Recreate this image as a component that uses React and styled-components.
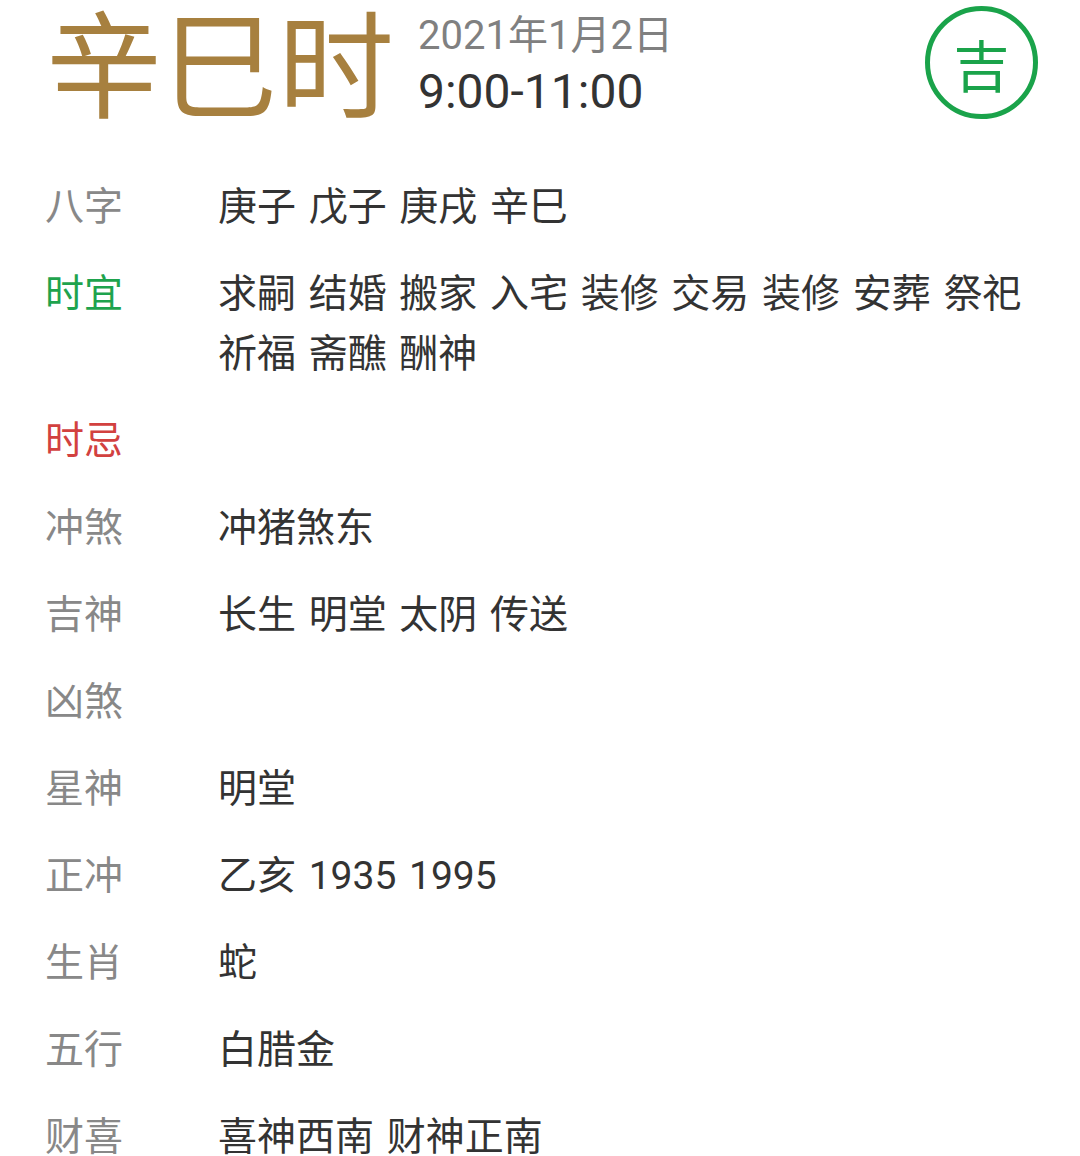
import React from 'react';
import styled, { createGlobalStyle } from 'styled-components';

const GlobalStyle = createGlobalStyle`
    html, body {
        margin: 0;
        padding: 0;
        background: #fff;
    }
    body {
        font-family: Roboto, "Noto Sans CJK SC", sans-serif;
        color: #333;
    }
`;

const Page = styled.div`
    width: 1080px;
    height: 1156px;
    overflow: hidden;
    padding: 0 45px;
    box-sizing: border-box;
`;

const Header = styled.div`
    display: flex;
    align-items: flex-start;
    height: 132px;
`;

const HourName = styled.div`
    font-family: "Noto Sans CJK SC", sans-serif;
    font-size: 116px;
    line-height: 128px;
    color: #a7803f;
    margin-top: -6px;
    margin-left: 1px;
`;

const DateBlock = styled.div`
    display: flex;
    flex-direction: column;
    margin-left: 24px;
    padding-top: 12px;
`;

const DateText = styled.div`
    font-size: 40px;
    line-height: 48px;
    color: #808080;
`;

const TimeText = styled.div`
    font-size: 48px;
    line-height: 64px;
    color: #333;
`;

const Badge = styled.div`
    margin-left: auto;
    margin-right: -3px;
    margin-top: 6px;
    width: 103px;
    height: 103px;
    border: 5px solid #1aa34a;
    border-radius: 50%;
    display: flex;
    align-items: center;
    justify-content: center;
    color: #1aa34a;
    font-family: "Noto Sans CJK SC", sans-serif;
    font-size: 56px;
    line-height: 1;
`;

const Table = styled.div`
    display: grid;
    grid-template-columns: 173px 1fr;
    row-gap: 27px;
    margin-top: 45px;
`;

const Label = styled.div`
    font-size: 39px;
    line-height: 60px;
    color: ${p => p.tone === 'good' ? '#1ea34d' : p.tone === 'bad' ? '#d2413f' : '#888'};
`;

const Value = styled.div`
    font-size: 39px;
    line-height: 60px;
    color: #333;
    word-spacing: 3px;
`;

const rows = [
    { label: '八字', value: '庚子 戊子 庚戌 辛巳' },
    { label: '时宜', tone: 'good', value: '求嗣 结婚 搬家 入宅 装修 交易 装修 安葬 祭祀 祈福 斋醮 酬神' },
    { label: '时忌', tone: 'bad', value: '' },
    { label: '冲煞', value: '冲猪煞东' },
    { label: '吉神', value: '长生 明堂 太阴 传送' },
    { label: '凶煞', value: '' },
    { label: '星神', value: '明堂' },
    { label: '正冲', value: '乙亥 1935 1995' },
    { label: '生肖', value: '蛇' },
    { label: '五行', value: '白腊金' },
    { label: '财喜', value: '喜神西南 财神正南' },
];

const App = () => (
    <Page>
        <GlobalStyle />
        <Header>
            <HourName>辛巳时</HourName>
            <DateBlock>
                <DateText>2021年1月2日</DateText>
                <TimeText>9:00-11:00</TimeText>
            </DateBlock>
            <Badge>吉</Badge>
        </Header>
        <Table>
            {rows.map(r => (
                <React.Fragment key={r.label}>
                    <Label tone={r.tone}>{r.label}</Label>
                    <Value>{r.value}</Value>
                </React.Fragment>
            ))}
        </Table>
    </Page>
);

export default App;
